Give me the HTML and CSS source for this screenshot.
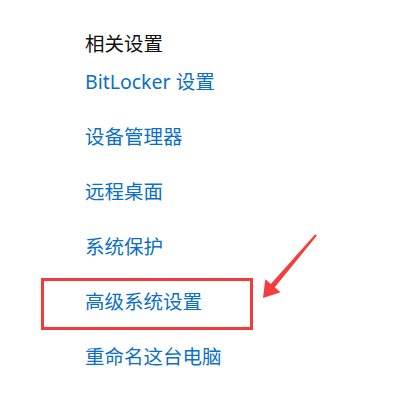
FILE: index.html
```html
<!DOCTYPE html>
<html lang="zh-CN">
<head>
<meta charset="utf-8">
<title>相关设置</title>
<link rel="stylesheet" href="styles.css">
</head>
<body>
<main class="panel">
  <h2 class="heading">相关设置</h2>
  <ul class="links">
    <li><a class="link" href="#">BitLocker 设置</a></li>
    <li><a class="link" href="#">设备管理器</a></li>
    <li><a class="link" href="#">远程桌面</a></li>
    <li><a class="link" href="#">系统保护</a></li>
    <li><a class="link" href="#">高级系统设置</a></li>
    <li><a class="link" href="#">重命名这台电脑</a></li>
  </ul>
</main>
<div class="highlight-box"></div>
<svg class="arrow" width="418" height="415" viewBox="0 0 418 415">
  <polygon points="315.2,234.2 316.8,235.8 274.8,287.3 280.5,292.3 263,298 265.3,279.3 270.8,283.9" fill="#f43d3d"/>
</svg>
</body>
</html>
```
FILE: styles.css
```css
html, body {
  margin: 0;
  padding: 0;
  background: #ffffff;
}
body {
  width: 418px;
  height: 415px;
  position: relative;
  overflow: hidden;
  font-family: "Noto Sans", "Noto Sans CJK SC", sans-serif;
}
.panel {
  padding: 30px 0 0 85px;
}
.heading {
  margin: 0;
  font-size: 19.5px;
  font-weight: 400;
  line-height: 28px;
  color: #111111;
}
.links {
  list-style: none;
  margin: 10px 0 0 0;
  padding: 0;
  display: flex;
  flex-direction: column;
  gap: 27px;
}
.links li {
  height: 28px;
}
.link {
  font-size: 19.5px;
  line-height: 28px;
  color: #0b6fc6;
  text-decoration: none;
}
.highlight-box {
  position: absolute;
  left: 41px;
  top: 278px;
  width: 206px;
  height: 46px;
  border: 3px solid #f23b3b;
}
.arrow {
  position: absolute;
  left: 0;
  top: 0;
}
```
